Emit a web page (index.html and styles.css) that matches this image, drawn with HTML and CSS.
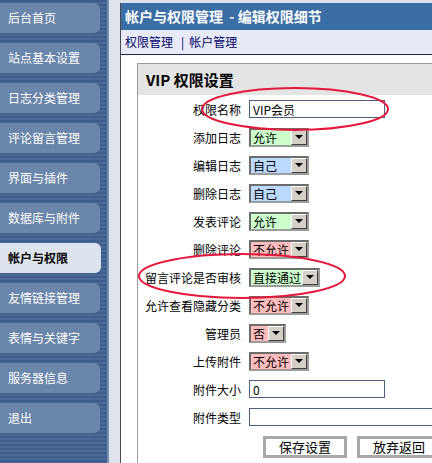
FILE: index.html
```html
<!DOCTYPE html>
<html lang="zh-CN">
<head>
    <meta charset="UTF-8">
    <title>帐户与权限管理 - 编辑权限细节</title>
    <link rel="stylesheet" href="styles.css">
</head>
<body>

<div class="page">
    <ul class="side">
        <li>后台首页</li>
        <li>站点基本设置</li>
        <li>日志分类管理</li>
        <li>评论留言管理</li>
        <li>界面与插件</li>
        <li>数据库与附件</li>
        <li class="active">帐户与权限</li>
        <li>友情链接管理</li>
        <li>表情与关键字</li>
        <li>服务器信息</li>
        <li>退出</li>
    </ul>
    <div class="gutter"></div>

    <div class="main">
        <div class="title">帐户与权限管理 &nbsp;- 编辑权限细节</div>
        <div class="subnav"><a href="#">权限管理</a><span class="sep">|</span><a href="#">帐户管理</a></div>

        <div class="box">
            <div class="box-head">VIP 权限设置</div>
            <div class="form">
                <label>权限名称</label>
                <input type="text" class="txt" value="VIP会员">

                <label>添加日志</label>
                <span class="sel yes"><span class="val">允许</span><span class="arr"></span></span>

                <label>编辑日志</label>
                <span class="sel own"><span class="val">自己</span><span class="arr"></span></span>

                <label>删除日志</label>
                <span class="sel own"><span class="val">自己</span><span class="arr"></span></span>

                <label>发表评论</label>
                <span class="sel yes"><span class="val">允许</span><span class="arr"></span></span>

                <label>删除评论</label>
                <span class="sel no"><span class="val">不允许</span><span class="arr"></span></span>

                <label>留言评论是否审核</label>
                <span class="sel yes wide"><span class="val">直接通过</span><span class="arr"></span></span>

                <label>允许查看隐藏分类</label>
                <span class="sel no"><span class="val">不允许</span><span class="arr"></span></span>

                <label>管理员</label>
                <span class="sel no small"><span class="val">否</span><span class="arr"></span></span>

                <label>上传附件</label>
                <span class="sel no"><span class="val">不允许</span><span class="arr"></span></span>

                <label>附件大小</label>
                <input type="text" class="txt" value="0">

                <label>附件类型</label>
                <input type="text" class="txt long" value="">
            </div>
            <div class="actions">
                <button type="button">保存设置</button>
                <button type="button">放弃返回</button>
            </div>
        </div>
    </div>

    <!-- red marks drawn over the screenshot -->
    <svg class="marks" width="432" height="463" viewBox="0 0 432 463">
        <ellipse cx="295" cy="109" rx="93" ry="21" fill="none" stroke="#e5173c" stroke-width="2"/>
        <ellipse cx="242" cy="276" rx="103" ry="22" fill="none" stroke="#e5173c" stroke-width="2"/>
    </svg>
</div>

</body>
</html>
```

FILE: styles.css
```css
body {
    margin: 0;
    font-family: "Noto Sans CJK SC", "DejaVu Sans", sans-serif;
    font-size: 12px;
    overflow: hidden;
    background: #dfe4ec;
}
.page {
    position: relative;
    display: flex;
    width: 432px;
    height: 463px;
    overflow: hidden;
}
.side {
    list-style: none;
    margin: 0;
    padding: 3px 0 0 0;
    width: 107px;
    flex-shrink: 0;
    border-right: 2px solid #7890b4;
    background: repeating-linear-gradient(to bottom, #3e5d8a 0, #3e5d8a 2px, #4a6996 2px, #4a6996 4px);
    display: flex;
    flex-direction: column;
    gap: 10px;
}
.side li {
    width: 92px;
    height: 30px;
    line-height: 30px;
    padding-left: 8px;
    color: #fff;
    background: #6a86aa;
    border-radius: 0 6px 6px 0;
}
.side li.active {
    background: #dde3ec;
    color: #000;
    font-weight: bold;
    width: 93px;
}
.gutter {
    width: 11px;
    flex-shrink: 0;
}
.main {
    margin-top: 3px;
    flex: 1;
    background: #fff;
    border-left: 1px solid #4a4a4a;
    min-width: 0;
}
.title {
    height: 27px;
    line-height: 27px;
    padding-left: 4px;
    background: #3b6ea5;
    color: #fff;
    font-weight: bold;
    font-size: 14px;
    white-space: nowrap;
}
.subnav {
    height: 24px;
    line-height: 24px;
    padding-left: 4px;
    background: #e7ebf7;
    border-bottom: 1px solid #1c2b52;
    color: #000066;
    white-space: nowrap;
}
.subnav a {
    color: #000066;
    text-decoration: none;
}
.subnav .sep {
    margin: 0 5px 0 8px;
}
.box {
    margin: 8px 0 0 16px;
    width: 400px;
    height: 420px;
    border: 1px solid #9a9a9a;
    border-right: none;
}
.box-head {
    height: 31px;
    line-height: 31px;
    padding-left: 8px;
    background: #e4e4e4;
    font-weight: bold;
    font-size: 15px;
}
.form {
    display: grid;
    grid-template-columns: 103px auto;
    grid-auto-rows: 28px;
    column-gap: 8px;
    align-items: center;
    justify-items: start;
}
.form label {
    justify-self: end;
    white-space: nowrap;
    color: #000;
}
.txt {
    box-sizing: border-box;
    width: 136px;
    height: 18px;
    margin: 0;
    padding: 0 3px;
    border: 1px solid #4b5f80;
    font-family: inherit;
    font-size: 12px;
    outline: none;
}
.txt.long {
    width: 200px;
}
.sel {
    display: inline-flex;
    box-sizing: border-box;
    width: 60px;
    height: 19px;
    border: 2px solid;
    border-color: #6c6c6c #9c9c9c #9c9c9c #6c6c6c;
    background: #fff;
}
.sel.wide {
    width: 71px;
}
.sel.small {
    width: 37px;
}
.sel .val {
    flex: 1;
    line-height: 15px;
    padding-left: 2px;
    white-space: nowrap;
}
.sel.yes .val { background: #ccffcc; }
.sel.own .val { background: #bcd9ff; }
.sel.no .val { background: #ffbdbd; }
.sel .arr {
    box-sizing: border-box;
    width: 16px;
    flex-shrink: 0;
    background: #d4d0c8;
    border: 1px solid;
    border-color: #fff #404040 #404040 #fff;
    display: flex;
    align-items: center;
    justify-content: center;
}
.sel .arr::after {
    content: "";
    border-top: 4px solid #000;
    border-left: 4px solid transparent;
    border-right: 4px solid transparent;
}
.actions {
    display: flex;
    gap: 10px;
    margin: 5px 0 0 125px;
}
.actions button {
    box-sizing: border-box;
    width: 84px;
    height: 22px;
    padding: 0;
    background: #fff;
    border: 3px solid #a8a8a8;
    font-family: inherit;
    font-size: 13px;
    line-height: 16px;
    color: #000;
}
.marks {
    position: absolute;
    left: 0;
    top: 0;
    pointer-events: none;
}
```
